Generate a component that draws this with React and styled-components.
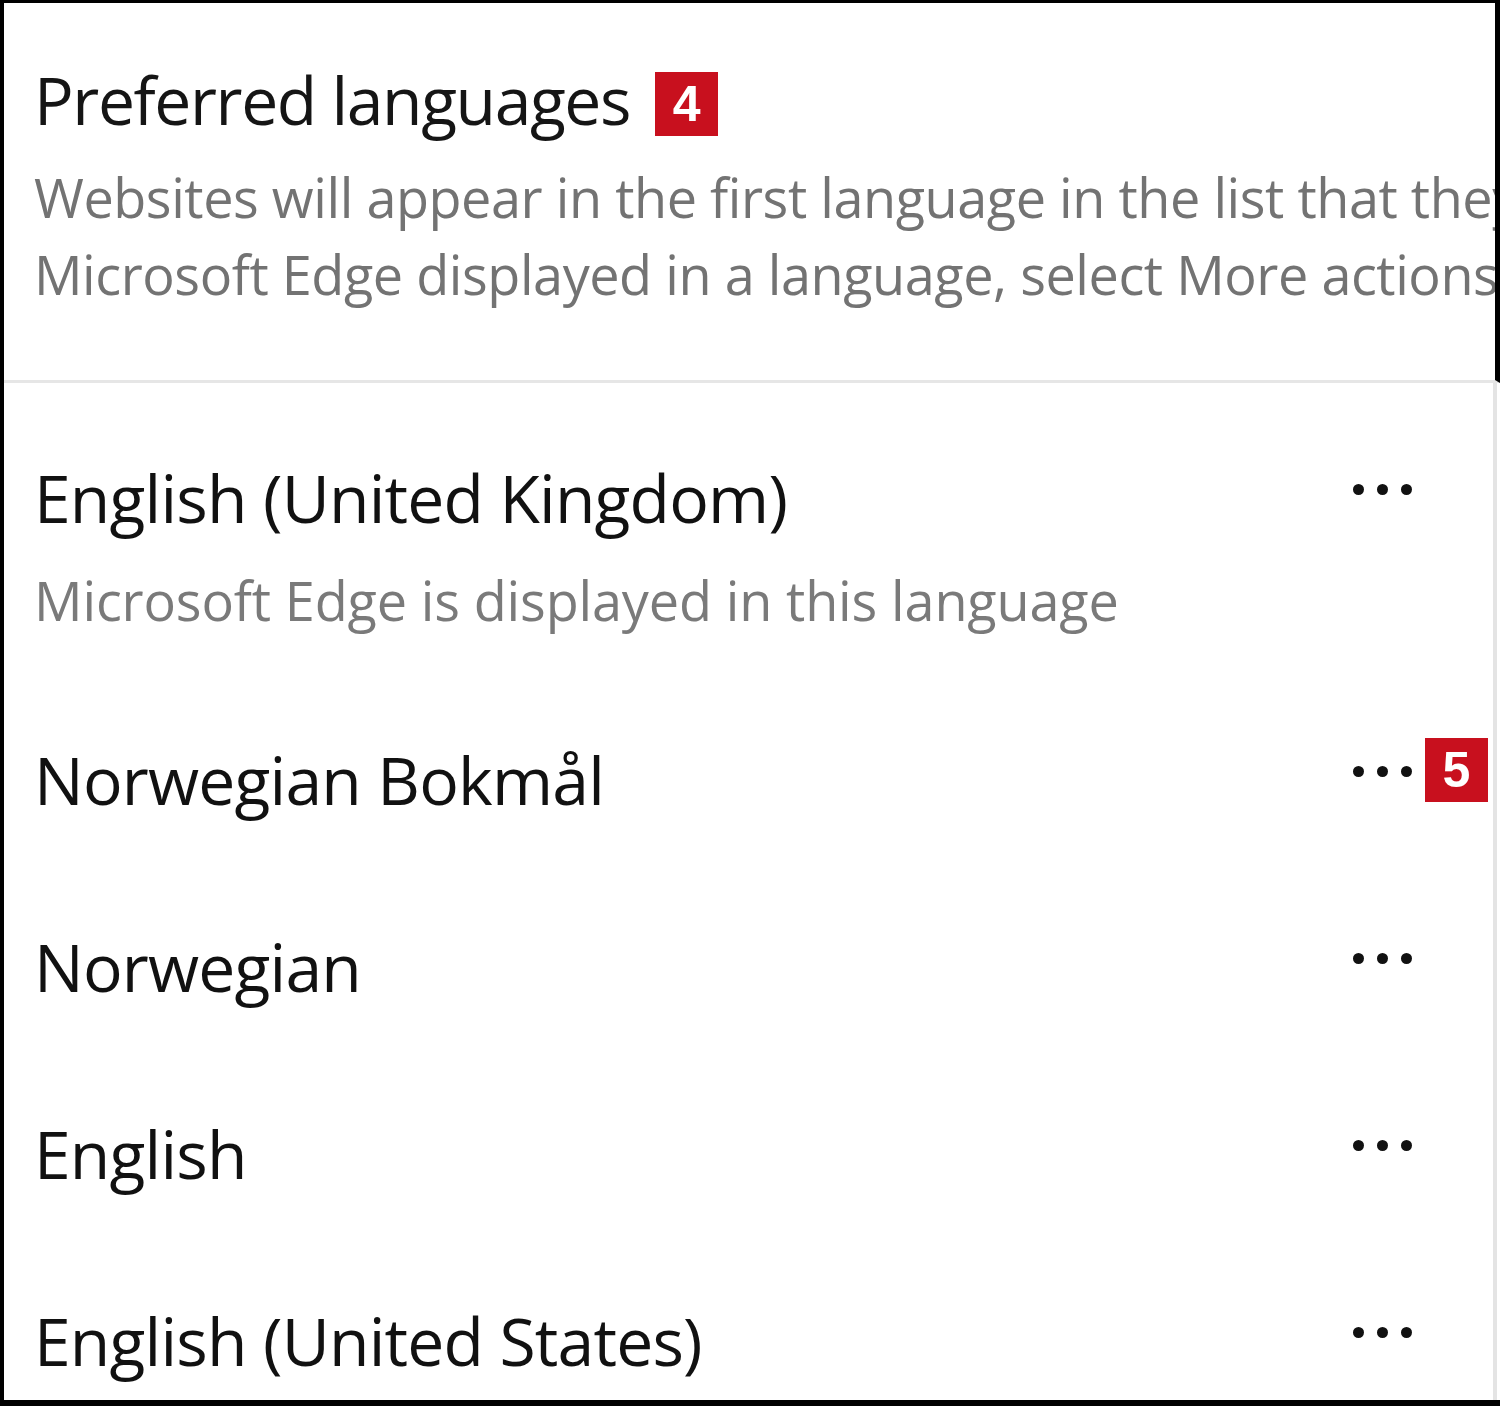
import styled, { createGlobalStyle } from "styled-components";

//==============================================================================
// STYLING
//==============================================================================
const GlobalStyle = createGlobalStyle`
  html, body {
    margin: 0;
    padding: 0;
    background: #ffffff;
  }
  body {
    font-family: "Open Sans", "Noto Sans", "Liberation Sans", sans-serif;
  }
`

const Frame = styled.div`
  box-sizing: border-box;
  width: 1500px;
  height: 1406px;
  border-top: 3px solid #000;
  border-left: 4px solid #000;
  border-bottom: 6px solid #000;
  background: #fff;
  display: flex;
  flex-direction: column;
  overflow: hidden;
`

const Header = styled.div`
  box-sizing: border-box;
  height: 380px;
  padding: 56px 0 0 30px;
  border-right: 5px solid #000;
  border-bottom: 3px solid #e6e6e6;
  overflow: hidden;
  flex-shrink: 0;
`

const Title = styled.h2`
  margin: 0;
  display: flex;
  align-items: center;
  font-size: 66px;
  line-height: 80px;
  font-weight: 400;
  color: #151515;
  letter-spacing: -1.4px;
`

const Badge = styled.span`
  display: inline-flex;
  align-items: center;
  justify-content: center;
  width: 63px;
  height: 64px;
  background: #c8101e;
  color: #fff;
  font-family: "Liberation Sans", Arial, sans-serif;
  font-weight: 700;
  font-size: 50px;
  letter-spacing: 0;
  line-height: 1;
  flex-shrink: 0;
`

const TitleBadge = styled(Badge)`
  margin-left: 25px;
  position: relative;
  top: 5px;
`

const Intro = styled.p`
  margin: 20px 0 0 0;
  font-size: 54px;
  line-height: 77px;
  color: #737373;
  white-space: nowrap;
  letter-spacing: -0.45px;

  span {
    display: block;
  }
`

const List = styled.div`
  flex: 1;
  padding-top: 21px;
  border-right: 4px solid #e4e4e4;
  margin-right: 3px;
`

const Row = styled.div`
  position: relative;
  display: flex;
  align-items: flex-start;
  padding: 53px 81px 54px 30px;
`

const Texts = styled.div`
  flex: 1;
  min-width: 0;
`

const Name = styled.div`
  font-size: 66px;
  line-height: 80px;
  color: #111;
  letter-spacing: -0.8px;
  white-space: nowrap;
`

const Sub = styled.div`
  margin-top: 31px;
  font-size: 54px;
  line-height: 64px;
  color: #7a7a7a;
  letter-spacing: -0.15px;
  white-space: nowrap;
`

const MoreButton = styled.button`
  display: flex;
  align-items: center;
  gap: 13px;
  height: 64px;
  padding: 0;
  border: none;
  background: none;
  cursor: pointer;

  i {
    display: block;
    width: 11px;
    height: 11px;
    border-radius: 50%;
    background: #111;
  }
`

const RowBadge = styled(Badge)`
  position: absolute;
  top: 52px;
  right: 5px;
`

//==============================================================================
// DATA
//==============================================================================
const languages = [
    {name: 'English (United Kingdom)', sub: 'Microsoft Edge is displayed in this language'},
    {name: 'Norwegian Bokmål', badge: 5},
    {name: 'Norwegian'},
    {name: 'English'},
    {name: 'English (United States)'},
]

//==============================================================================
// PAGE
//==============================================================================
const App = () => {
    return (
        <>
            <GlobalStyle/>
            <Frame>
                <Header>
                    <Title>
                        Preferred languages
                        <TitleBadge>4</TitleBadge>
                    </Title>
                    <Intro>
                        <span>Websites will appear in the first language in the list that they support. To have</span>
                        <span>Microsoft Edge displayed in a language, select More actions and then Display Microsoft Edge in this language.</span>
                    </Intro>
                </Header>
                <List>
                    {languages.map(lang => (
                        <Row key={lang.name}>
                            <Texts>
                                <Name>{lang.name}</Name>
                                {lang.sub && <Sub>{lang.sub}</Sub>}
                            </Texts>
                            <MoreButton aria-label={'More actions'}>
                                <i/><i/><i/>
                            </MoreButton>
                            {lang.badge && <RowBadge>{lang.badge}</RowBadge>}
                        </Row>
                    ))}
                </List>
            </Frame>
        </>
    )
}

export default App;
